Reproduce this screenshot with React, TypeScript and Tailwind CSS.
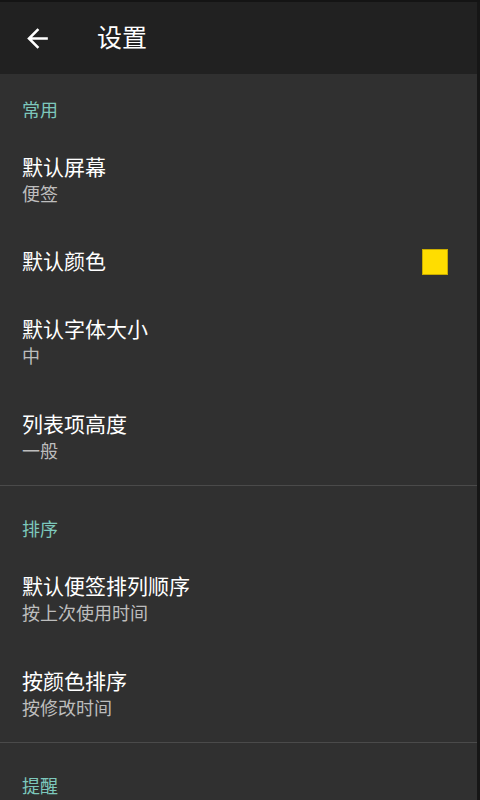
import React from "react";

type Item = { title: string; sub?: string; swatch?: string };
type Section = { label: string; items: Item[] };

const sections: Section[] = [
  {
    label: "常用",
    items: [
      { title: "默认屏幕", sub: "便签" },
      { title: "默认颜色", swatch: "#ffdd00" },
      { title: "默认字体大小", sub: "中" },
      { title: "列表项高度", sub: "一般" },
    ],
  },
  {
    label: "排序",
    items: [
      { title: "默认便签排列顺序", sub: "按上次使用时间" },
      { title: "按颜色排序", sub: "按修改时间" },
    ],
  },
  { label: "提醒", items: [] },
];

const Row = ({ item }: { item: Item }) => {
  if (!item.sub) {
    return (
      <div className="flex h-[67px] items-center justify-between pl-[22px] pr-[29px]">
        <span className="pb-[2px] text-[21px] leading-[27px] text-white">{item.title}</span>
        {item.swatch && (
          <span className="h-[26px] w-[26px] border border-[#c9ac00] bg-[#ffdd00]" />
        )}
      </div>
    );
  }
  return (
    <div className="flex flex-col pl-[22px] pt-[20px] pb-[21px]">
      <span className="text-[21px] leading-[27px] text-white">{item.title}</span>
      <span className="text-[18px] leading-[27px] text-[#bdbdbd]">{item.sub}</span>
    </div>
  );
};

export default function App() {
  return (
    <div
      className="h-[800px] w-[480px] overflow-hidden bg-[#141414]"
      style={{ fontFamily: '"Noto Sans CJK SC", "Noto Sans", sans-serif' }}
    >
      <div className="h-[2px]" />
      <div className="flex h-[798px]">
        <div className="flex w-[477px] flex-col bg-[#303030]">
          {/* Toolbar */}
          <header className="flex h-[72px] shrink-0 items-center bg-[#212121]">
            <button className="ml-[22px] text-white">
              <svg width="31" height="31" viewBox="0 0 24 24" fill="currentColor">
                <path d="M20 11H7.83l5.59-5.59L12 4l-8 8 8 8 1.41-1.41L7.83 13H20v-2z" />
              </svg>
            </button>
            <h1 className="ml-[44px] pb-[4px] text-[25px] leading-[32px] text-white">设置</h1>
          </header>

          {sections.map((section, i) => (
            <div key={section.label} className={i > 0 ? "border-t border-[#4a4a4a]" : ""}>
              <div
                className={`${i === 0 ? "pt-[23px]" : "pt-[30px]"} pb-[12px] pl-[22px] text-[18px] leading-[24px] text-[#7dc8bc]`}
              >
                {section.label}
              </div>
              {section.items.map((item) => (
                <Row key={item.title} item={item} />
              ))}
            </div>
          ))}
        </div>
        <div className="flex-1 bg-[#161616]" />
      </div>
    </div>
  );
}
